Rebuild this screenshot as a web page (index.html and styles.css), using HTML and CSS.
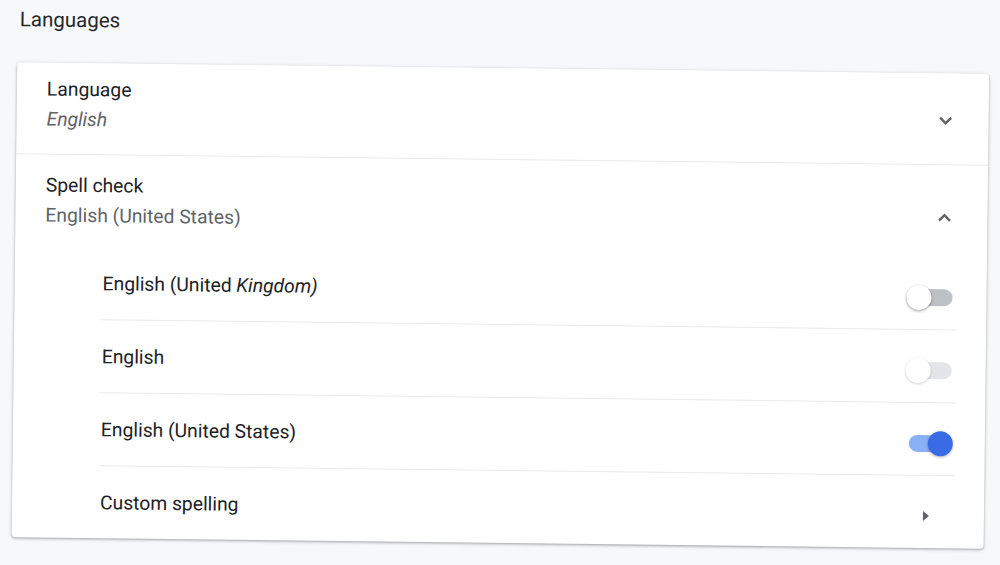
FILE: index.html
```html
<!DOCTYPE html>
<html>
<head>
<meta charset="utf-8">
<link rel="stylesheet" href="styles.css">
</head>
<body>
<div class="page">
  <h2 class="title">Languages</h2>
  <div class="card">
    <div class="row row-first">
      <div class="text text-first">
        <div class="label">Language</div>
        <div class="sub sub-italic">English</div>
      </div>
      <span class="icon-btn">
        <svg width="14" height="9" viewBox="0 0 14 9"><path d="M1.5 1.5 L7 7 L12.5 1.5" fill="none" stroke="#5f6368" stroke-width="2.4"/></svg>
      </span>
    </div>
    <div class="row row-second">
      <div class="text">
        <div class="label">Spell check</div>
        <div class="sub">English (United States)</div>
      </div>
      <span class="icon-btn icon-btn-low">
        <svg width="14" height="9" viewBox="0 0 14 9"><path d="M1.5 7.5 L7 2 L12.5 7.5" fill="none" stroke="#5f6368" stroke-width="2.4"/></svg>
      </span>
    </div>
    <div class="sublist">
      <div class="subrow">
        <span class="name">English (United <i class="slant">Kingdom)</i></span>
        <span class="toggle toggle-off"><span class="knob"></span></span>
      </div>
      <div class="subrow">
        <span class="name">English</span>
        <span class="toggle toggle-disabled"><span class="knob"></span></span>
      </div>
      <div class="subrow">
        <span class="name">English (United States)</span>
        <span class="toggle toggle-on"><span class="knob"></span></span>
      </div>
      <div class="subrow subrow-last">
        <span class="name">Custom spelling</span>
        <span class="arrow">
          <svg width="8" height="12" viewBox="0 0 8 12"><path d="M1 1 L7 6 L1 11 Z" fill="#5f6368"/></svg>
        </span>
      </div>
    </div>
  </div>
</div>
</body>
</html>
```
FILE: styles.css
```css
html, body {
  margin: 0;
  padding: 0;
  background: #f7f8fa;
  font-family: Roboto, "Noto Sans", "Liberation Sans", sans-serif;
  color: #202124;
  overflow: hidden;
  height: 565px;
}
.page {
  width: 1000px;
  height: 565px;
  padding: 0 0 0 18px;
  box-sizing: border-box;
  transform: rotate(0.68deg);
  transform-origin: 0 0;
}
.title {
  margin: 0;
  padding: 6px 0 0 2px;
  height: 62px;
  box-sizing: border-box;
  font-size: 20.5px;
  font-weight: 400;
  line-height: 26px;
  color: #26282b;
}
.card {
  width: 972px;
  height: 475px;
  background: #fff;
  border-radius: 4px;
  box-shadow: 0 1px 2px rgba(60,64,67,.3), 0 1px 3px 1px rgba(60,64,67,.15);
  display: flex;
  flex-direction: column;
}
.row {
  display: flex;
  align-items: center;
  padding: 0 25px 0 30px;
}
.row-first {
  height: 92px;
  border-bottom: 1px solid #e8eaed;
}
.row-second {
  height: 94px;
}
.text {
  flex: 1;
}
.text-first {
  margin-bottom: 7px;
}
.label {
  font-size: 19.3px;
  line-height: 30px;
  color: #202124;
}
.sub {
  font-size: 19.3px;
  line-height: 30px;
  color: #5f6368;
}
.sub-italic {
  font-style: italic;
}
.icon-btn {
  width: 36px;
  height: 36px;
  display: flex;
  align-items: center;
  justify-content: center;
  margin-top: 4px;
}
.icon-btn-low {
  margin-top: 14px;
}
.sublist {
  margin: 0 29px 0 86px;
  display: flex;
  flex-direction: column;
}
.subrow {
  height: 72px;
  display: flex;
  align-items: center;
  justify-content: space-between;
  padding: 0 4px 0 2px;
  border-bottom: 1px solid #e8eaed;
  font-size: 19.3px;
  color: #202124;
}
.subrow-last {
  border-bottom: none;
}
.slant {
  font-style: italic;
}
.toggle {
  position: relative;
  width: 42px;
  height: 17px;
  border-radius: 9px;
  margin-top: 8px;
  margin-right: 1px;
}
.knob {
  position: absolute;
  top: -4px;
  left: -4px;
  width: 25px;
  height: 25px;
  border-radius: 50%;
  background: #fff;
  box-shadow: 0 1px 3px rgba(0,0,0,.4);
}
.toggle-off {
  background: #bdc1c6;
}
.toggle-disabled {
  background: #e3e5e8;
}
.toggle-disabled .knob {
  box-shadow: 0 1px 3px rgba(0,0,0,.18);
}
.toggle-on {
  background: #8ab0f5;
}
.toggle-on .knob {
  left: auto;
  right: -2px;
  background: #3a6be6;
  box-shadow: 0 1px 3px rgba(0,0,0,.3);
}
.arrow {
  width: 8px;
  height: 12px;
  display: flex;
  margin: 8px 21px 0 0;
}
```
